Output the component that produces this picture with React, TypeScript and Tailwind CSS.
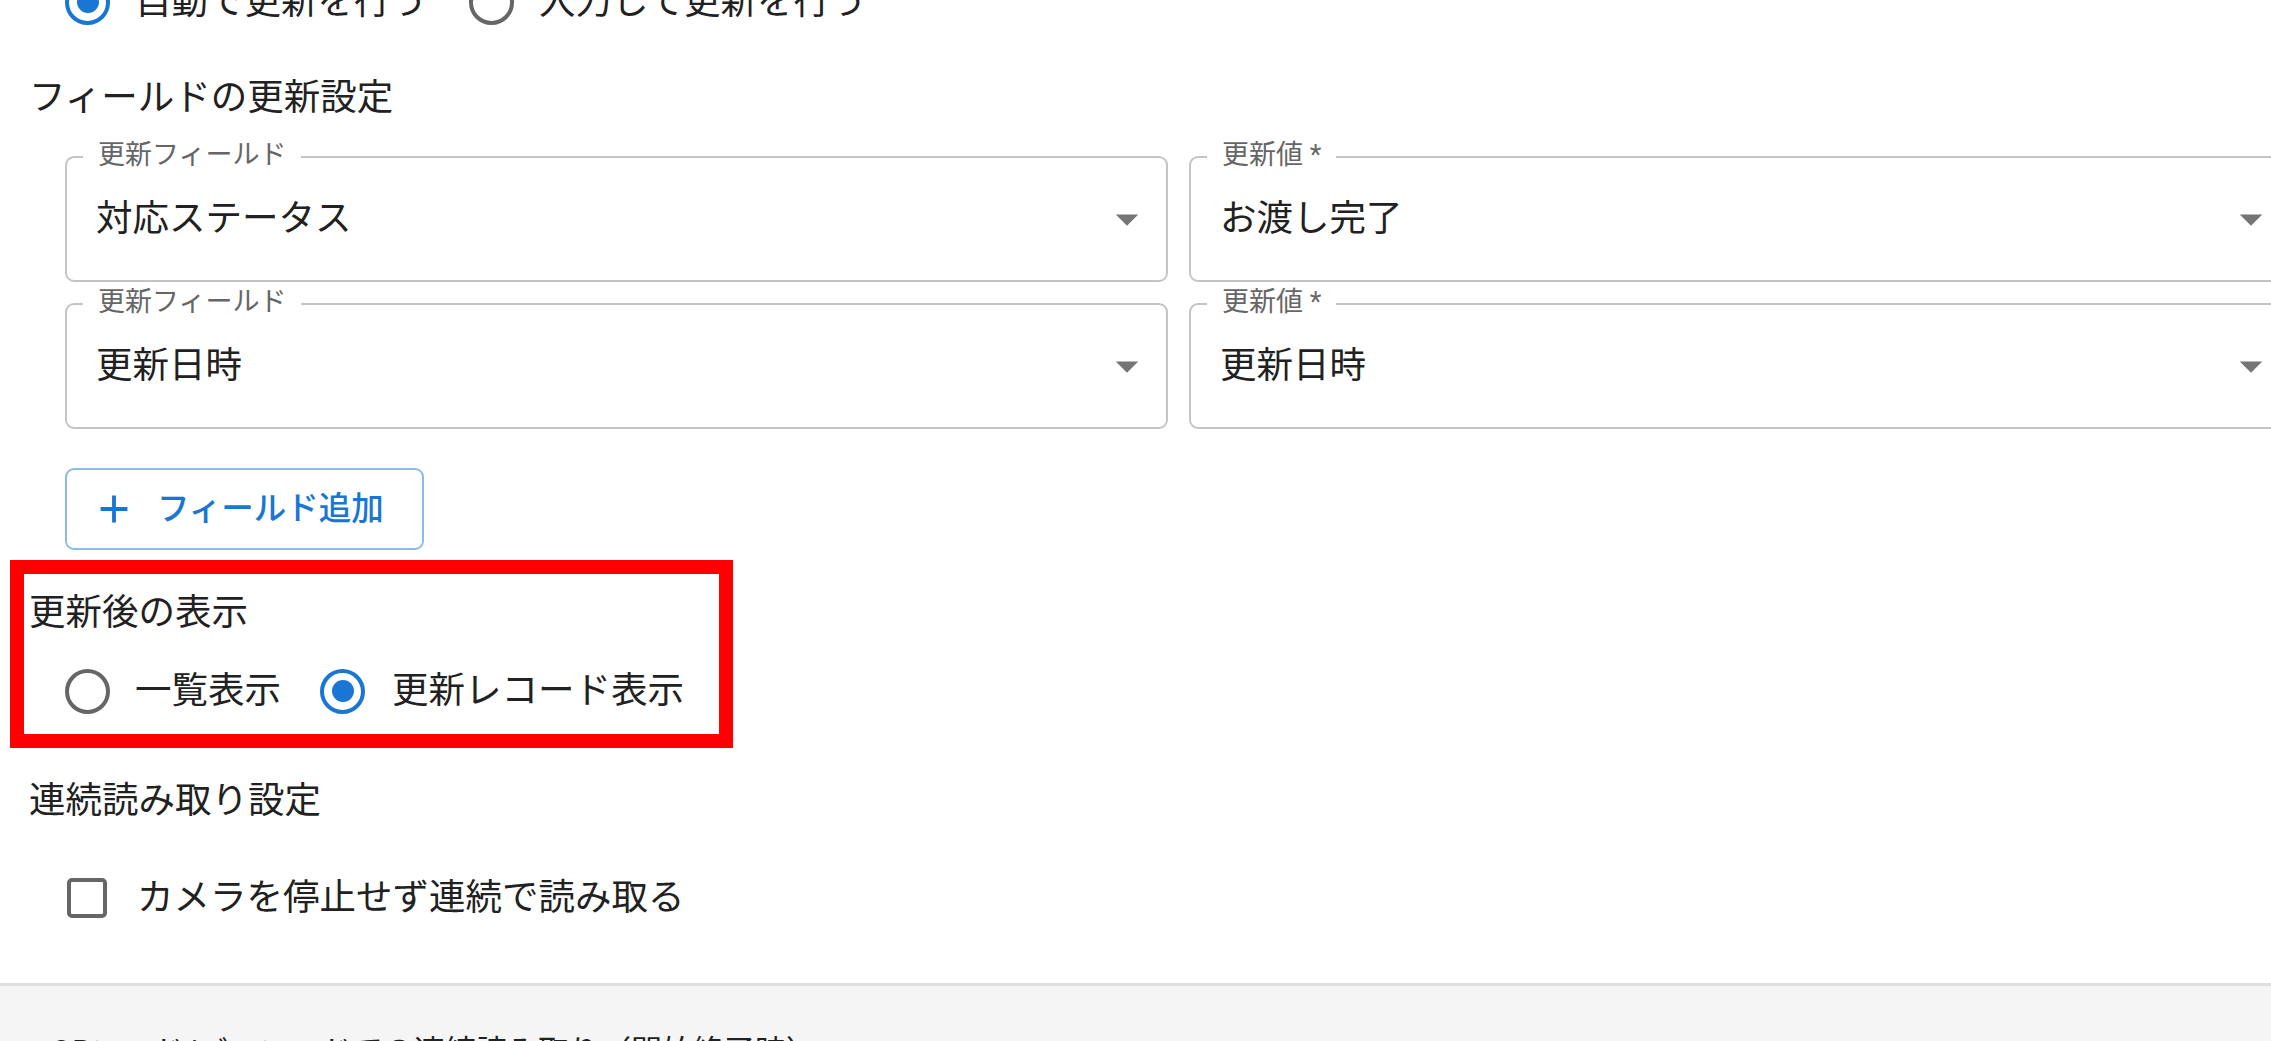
import React from "react";

function Radio({ checked }: { checked: boolean }) {
  return checked ? (
    <span className="flex h-[45px] w-[45px] shrink-0 items-center justify-center rounded-full border-[4.5px] border-[#1976d2]">
      <span className="h-[22px] w-[22px] rounded-full bg-[#1976d2]" />
    </span>
  ) : (
    <span className="flex h-[45px] w-[45px] shrink-0 items-center justify-center rounded-full border-[4.5px] border-[#666666]" />
  );
}

function ArrowDrop() {
  return (
    <svg width="54" height="54" viewBox="0 0 24 24" className="shrink-0">
      <path d="M7 10l5 5 5-5z" fill="#757575" />
    </svg>
  );
}

function Select({ label, value }: { label: string; value: string }) {
  return (
    <div className="relative h-[126px] rounded-[9px] border-2 border-[#c4c4c4]">
      <span className="absolute left-[16px] top-[-21px] bg-white px-[15px] text-[27px] leading-[36px] text-[#666666]">
        {label}
      </span>
      <div className="flex h-full items-center justify-between pl-[29px] pr-[12px]">
        <span className="text-[36.5px] leading-[54px] text-[#212121]">{value}</span>
        <ArrowDrop />
      </div>
    </div>
  );
}

export default function App() {
  return (
    <div className="flex h-[1041px] w-[2271px] flex-col overflow-hidden bg-white font-['Roboto','Noto_Sans_CJK_JP',sans-serif] text-[#212121]">
      {/* top radio row (cut off) */}
      <div className="mt-[-25px] flex h-[54px] shrink-0 items-center pl-[65px] text-[36.5px]">
        <Radio checked />
        <span className="ml-[25px] leading-[54px]">自動で更新を行う</span>
        <span className="ml-[42px]">
          <Radio checked={false} />
        </span>
        <span className="ml-[25px] leading-[54px]">入力して更新を行う</span>
      </div>

      <div className="mt-[42px] shrink-0 pl-[29px] text-[36.5px] leading-[54px]">フィールドの更新設定</div>

      <div className="mt-[31px] grid w-[2292px] shrink-0 grid-cols-2 gap-x-[21px] gap-y-[21px] pl-[65px]">
        <Select label="更新フィールド" value="対応ステータス" />
        <Select label="更新値 *" value="お渡し完了" />
        <Select label="更新フィールド" value="更新日時" />
        <Select label="更新値 *" value="更新日時" />
      </div>

      <div className="mt-[39px] shrink-0 pl-[65px]">
        <button className="flex h-[82px] items-center rounded-[9px] border-2 border-[#8cbae8] bg-white pl-[24px] pr-[38px]">
          <svg width="46" height="46" viewBox="0 0 24 24">
            <path d="M19 13h-6v6h-2v-6H5v-2h6V5h2v6h6v2z" fill="#1976d2" />
          </svg>
          <span className="ml-[20px] text-[32.5px] font-medium leading-[48px] text-[#1976d2]">フィールド追加</span>
        </button>
      </div>

      <div className="relative mt-[36px] shrink-0">
        <div className="pl-[29px] text-[36.5px] leading-[54px]">更新後の表示</div>
        <div className="mt-[24px] flex h-[54px] items-center pl-[65px] text-[36.5px]">
          <Radio checked={false} />
          <span className="ml-[25px] leading-[54px]">一覧表示</span>
          <span className="ml-[39px]">
            <Radio checked />
          </span>
          <span className="ml-[27px] leading-[54px]">更新レコード表示</span>
        </div>
        <div className="pointer-events-none absolute left-[10px] top-[-26px] h-[188px] w-[723px] border-[14px] border-[#ff0000]" />
      </div>

      <div className="mt-[56px] shrink-0 pl-[29px] text-[36.5px] leading-[54px]">連続読み取り設定</div>

      <div className="mt-[43px] flex h-[54px] shrink-0 items-center pl-[67px] text-[36.5px]">
        <span className="h-[40px] w-[40px] shrink-0 rounded-[5px] border-[4.5px] border-[#666666]" />
        <span className="ml-[30px] leading-[54px]">カメラを停止せず連続で読み取る</span>
      </div>

      <div className="mt-[58px] flex-1 border-t-[3px] border-[#e0e0e0] bg-[#f5f5f5] pl-[12px] pt-[42px]">
        <div className="text-[31px] leading-[48px] text-[#212121]">・ QRコード/バーコードでの連続読み取り（開始終了時）</div>
      </div>
    </div>
  );
}
